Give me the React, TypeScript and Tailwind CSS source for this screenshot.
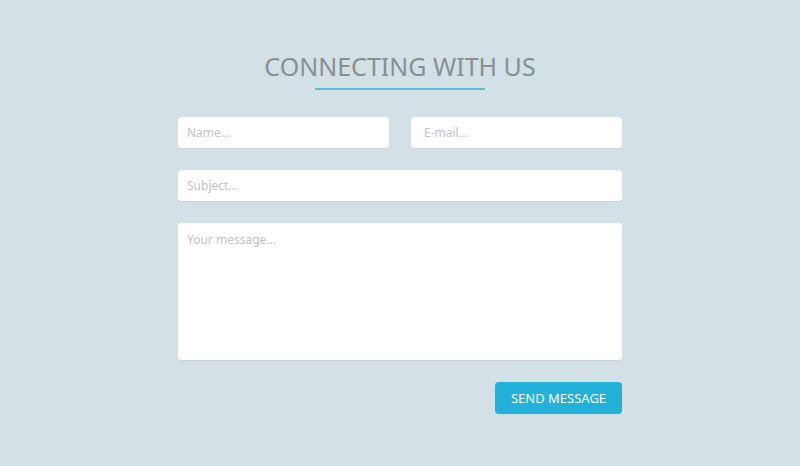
import React from 'react';
import { clsx } from 'clsx';

const fieldClass =
  'block w-full rounded-[4px] border-b border-[#c9d3d7] bg-white text-[12px] leading-4 text-[#666666] placeholder:text-[#c2c2c2] outline-none focus:ring-1 focus:ring-[#22b1d9]';

interface TextFieldProps {
  name: string;
  label: string;
  type?: string;
  className?: string;
}

function TextField({ name, label, type = 'text', className }: TextFieldProps) {
  return (
    <input
      id={name}
      name={name}
      type={type}
      aria-label={label}
      placeholder={`${label}...`}
      className={clsx(fieldClass, 'h-8', className)}
    />
  );
}

export default function App() {
  return (
    <main className="min-h-screen bg-[#d3e0e6] px-4 py-12 font-['Noto_Sans',sans-serif]">
      <form className="mx-auto w-full max-w-[444px]" onSubmit={(e) => e.preventDefault()}>
        <header className="flex flex-col items-center gap-1">
          <h1 className="text-[25px] leading-9 text-[#8a8f91]">CONNECTING WITH US</h1>
          <span className="h-[2px] w-[170px] bg-[#5dbbd6]" />
        </header>

        <div className="mt-[27px] grid grid-cols-2 gap-[22px]">
          <TextField name="name" label="Name" className="px-[9px]" />
          <TextField name="email" label="E-mail" type="email" className="px-[13px]" />
        </div>
        <div className="mt-[21px]">
          <TextField name="subject" label="Subject" className="px-[9px]" />
        </div>
        <textarea
          id="message"
          name="message"
          aria-label="Your message"
          placeholder="Your message..."
          className={clsx(fieldClass, 'mt-[21px] h-[138px] resize-none px-[9px] py-[9px]')}
        />

        <div className="mt-[21px] flex justify-end">
          <button
            type="submit"
            className="h-8 w-[127px] rounded-[4px] bg-[#22b1d9] text-[13px] leading-4 text-white hover:bg-[#1ea3c9]"
          >
            SEND MESSAGE
          </button>
        </div>
      </form>
    </main>
  );
}
